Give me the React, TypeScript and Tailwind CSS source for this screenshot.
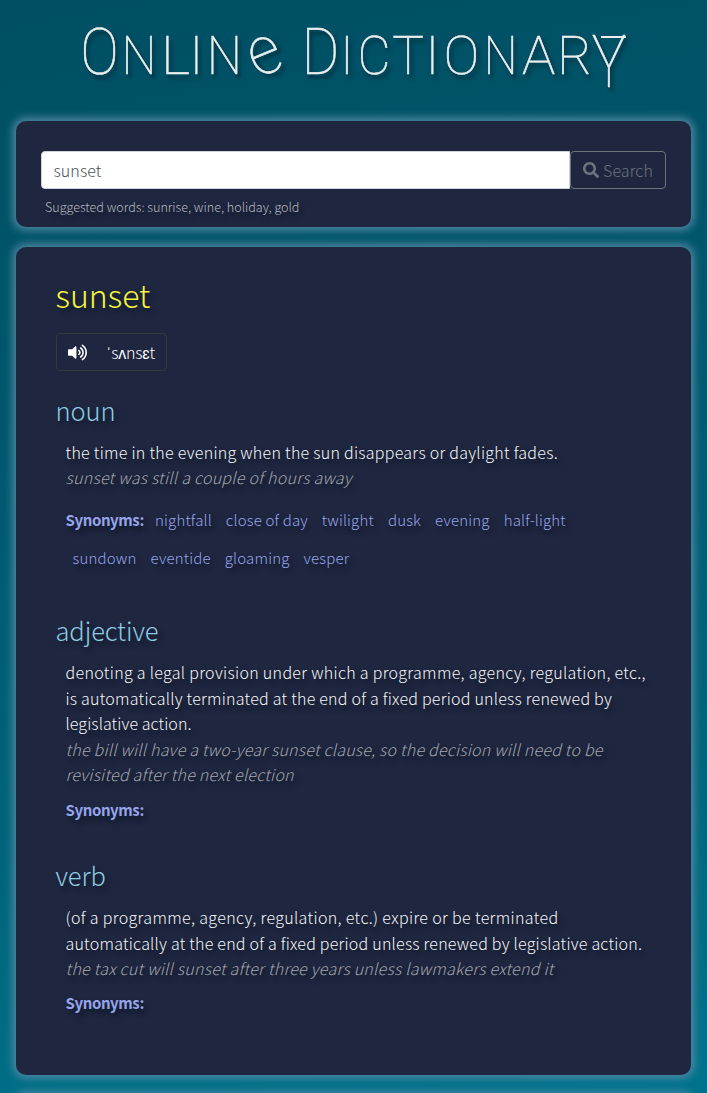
import type { ReactNode } from "react";
import { FaSearch, FaVolumeUp } from "react-icons/fa";

const panel = "shrink-0 rounded-[10px] bg-[#1f2640] shadow-[0_0_8px_3px_#5289a4]";
const shade = "[text-shadow:3px_4px_5px_rgba(0,20,30,0.7)]";

const title: [string, string][] = [
  ["O", "ml-[80px] w-[39px] text-[65px] scale-x-[0.88]"],
  ["n", "w-[40px] text-[53px] scale-x-[0.93]"],
  ["l", "w-[33px] text-[53px] scale-x-[1.05]"],
  ["i", "w-[9px] text-[53px]"],
  ["n", "w-[47px] text-[53px] scale-x-[0.93]"],
  ["e", "w-[30px] text-[68px] normal-case -rotate-[22deg] scale-x-[0.92]"],
  ["\u00a0", "w-[24px] text-[53px]"],
  ["D", "w-[37px] text-[65px] scale-x-[0.88]"],
  ["i", "w-[16px] text-[53px]"],
  ["c", "w-[38px] text-[53px] scale-x-[0.95]"],
  ["t", "w-[30px] text-[53px]"],
  ["i", "w-[19px] text-[53px]"],
  ["o", "w-[39px] text-[53px]"],
  ["n", "w-[39px] text-[53px] scale-x-[0.9]"],
  ["a", "w-[37px] text-[53px] scale-x-[1.05]"],
  ["r", "w-[35px] text-[53px]"],
  ["y", "relative w-[34px] text-[72px] top-[13px] scale-x-[0.8] before:absolute before:left-[7px] before:top-[23px] before:h-[2px] before:w-[31px] before:bg-[#eee]"],
];

function Line({ children, className = "tracking-[0.27px]" }: { children: ReactNode; className?: string }) {
  return <span className={`block ${className}`}>{children}</span>;
}

function Entry({ kind, gap, def, example, words, className }: { kind: string; gap: string; def: ReactNode; example: ReactNode; words?: ReactNode; className: string }) {
  return (
    <section className={className}>
      <h3 className={`-ml-[0.5px] text-[25.5px] leading-[30px] tracking-[-0.1px] text-[#8ecbe0] ${shade}`}>{kind}</h3>
      <div className={`ml-[9.5px] mt-[15px] whitespace-nowrap text-base leading-[25.6px] ${shade}`}>
        <p className="text-[#f8f8f8]">{def}</p>
        <p className="italic text-[#a3a6ae]">{example}</p>
      </div>
      <div className={`ml-[9.5px] text-[15px] leading-[38px] tracking-[0.17px] text-[#98a4ea] ${gap} ${shade}`}>
        <div className="flex"><b className="mr-[11.5px] w-[78px] whitespace-nowrap font-bold tracking-[-0.4px]">Synonyms:</b>{words}</div>
      </div>
    </section>
  );
}

export default function App() {
  return (
    <main className="flex h-[1093px] w-full flex-col overflow-hidden bg-[linear-gradient(170deg,#004f64_0%,#00566b_30%,#00647a_70%,#00738c_100%)] px-4 font-['Noto_Sans_CJK_KR',sans-serif] font-light">
      <h1 className="-mx-4 flex h-[121px] shrink-0 items-baseline font-['Roboto',sans-serif] font-[250] uppercase leading-[100px] text-[#eee] [-webkit-text-stroke:0.6px_#eee]">
        {title.map(([c, cls], i) => (
          <span key={i} className={`flex shrink-0 justify-center [text-shadow:3px_4px_4px_rgba(0,25,35,0.8)] ${cls}`}>{c}</span>
        ))}
      </h1>
      <div className={`h-[106px] px-[25px] pt-[30px] ${panel}`}>
        <div className="flex h-[38px]">
          <input readOnly value="sunset" className="w-[529px] rounded-l-[4px] border border-[#ced4da] bg-white px-[11.5px] text-base tracking-[0.1px] text-[#495057] outline-none" />
          <button className="flex flex-1 items-center justify-center rounded-[4px] border border-[#6c757d] text-base tracking-[0.1px] text-[#6c757d]">
            <FaSearch className="mr-1 size-4" />Search
          </button>
        </div>
        <p className={`ml-1 mt-2 text-[12.6px] leading-[19px] tracking-[-0.02px] text-[#b8bac0] ${shade}`}>Suggested words: sunrise, wine, holiday, gold</p>
      </div>
      <article className={`mt-5 h-[828px] px-10 pt-[25px] ${panel}`}>
        <h2 className={`-ml-[0.5px] text-[32px] leading-[44px] text-[#f6f63c] ${shade}`}>sunset</h2>
        <button className="mt-[17px] flex h-[38px] w-[111px] items-center rounded-[4px] border border-[#343a40] pl-[11px] text-base text-white">
          <FaVolumeUp className="mr-[19px] size-[19px]" /><span className="tracking-[-0.2px]">ˈsʌnsɛt</span>
        </button>
        <Entry
          className="mt-[24px] h-[220px]"
          gap="mt-[10.5px]"
          kind="noun"
          def={<Line className="tracking-[0.27px]">the time in the evening when the sun disappears or daylight fades.</Line>}
          example={<Line className="-mt-px tracking-[0.26px]">sunset was still a couple of hours away</Line>}
          words={<div className="flex flex-wrap gap-x-[14px]">
            {["nightfall", "close of day", "twilight", "dusk", "evening", "half-light"].map(w => <span key={w}>{w}</span>)}
            <div className="-ml-[82.5px] flex gap-[14px]">{["sundown", "eventide", "gloaming", "vesper"].map(w => <span key={w}>{w}</span>)}</div>
          </div>}
        />
        <Entry
          className="h-[245px]"
          gap="mt-[3px]"
          kind="adjective"
          def={<><Line className="tracking-[0.31px]">denoting a legal provision under which a programme, agency, regulation, etc.,</Line><Line className="tracking-[0.23px]">is automatically terminated at the end of a fixed period unless renewed by</Line><Line className="tracking-[0.08px]">legislative action.</Line></>}
          example={<><Line className="tracking-[0.22px]">the bill will have a two-year sunset clause, so the decision will need to be</Line><Line className="tracking-[0.22px]">revisited after the next election</Line></>}
        />
        <Entry
          className=""
          gap="mt-[2px]"
          kind="verb"
          def={<><Line className="tracking-[0.35px]">(of a programme, agency, regulation, etc.) expire or be terminated</Line><Line className="tracking-[0.22px]">automatically at the end of a fixed period unless renewed by legislative action.</Line></>}
          example={<Line className="tracking-[0.25px]">the tax cut will sunset after three years unless lawmakers extend it</Line>}
        />
      </article>
      <div className={`mt-5 h-20 ${panel}`} />
    </main>
  );
}
